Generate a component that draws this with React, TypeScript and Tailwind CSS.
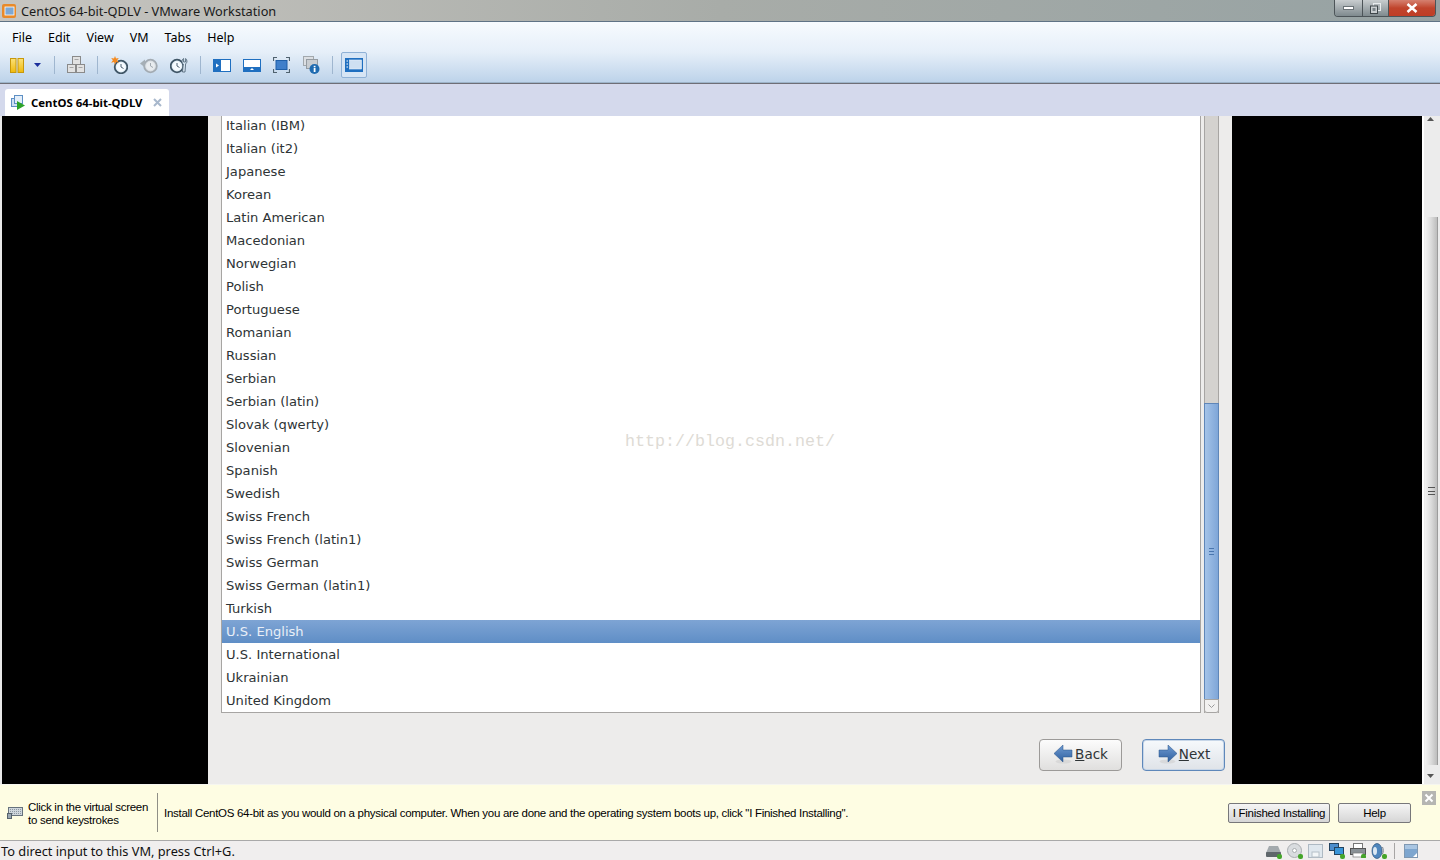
import React from "react";

const rows = ["Italian (IBM)","Italian (it2)","Japanese","Korean","Latin American","Macedonian","Norwegian","Polish","Portuguese","Romanian","Russian","Serbian","Serbian (latin)","Slovak (qwerty)","Slovenian","Spanish","Swedish","Swiss French","Swiss French (latin1)","Swiss German","Swiss German (latin1)","Turkish","U.S. English","U.S. International","Ukrainian","United Kingdom"];

const Sep = () => <div className="w-px h-[18px] bg-[#9fb6cf]" />;

const Clock = ({ grey, cx, cy }: { grey?: boolean; cx: number; cy: number }) => (
  <g>
    <circle cx={cx} cy={cy} r="6.300" fill={grey ? "#dbe0e5" : "#e6f1f9"} stroke={grey ? "#a3abb2" : "#3f5566"} strokeWidth="1.800" />
    <circle cx={cx} cy={cy} r="4.300" fill={grey ? "#e8ecef" : "#f6fbff"} />
    <path d={`M${cx} ${cy - 3}V${cy}l2.500 1.500`} fill="none" stroke={grey ? "#a3abb2" : "#4f6272"} strokeWidth="1" />
  </g>
);

function Toolbar() {
  return (
    <div className="flex items-center h-[30px] pl-[10px]">
      <svg width="14" height="15" viewBox="0 0 14 15"><defs><linearGradient id="pa" x1="0" y1="0" x2="0" y2="1"><stop offset="0" stopColor="#fbe27a"/><stop offset="1" stopColor="#f0b90b"/></linearGradient></defs><rect x="0.500" y="0.500" width="5.500" height="14" fill="url(#pa)" stroke="#c8980a"/><rect x="8" y="0.500" width="5.500" height="14" fill="url(#pa)" stroke="#c8980a"/></svg>
      <svg className="ml-[10px]" width="7" height="4" viewBox="0 0 7 4"><path d="M0 0h7L3.500 4z" fill="#1c2f9c"/></svg>
      <div className="ml-[13px]"><Sep /></div>
      <svg className="ml-[12px]" width="18" height="18" viewBox="0 0 18 18"><g fill="#e2e2e2" stroke="#8a8a8a"><rect x="5.500" y="0.500" width="8" height="8"/><rect x="0.500" y="8.500" width="8" height="8"/><rect x="9.500" y="8.500" width="8" height="8"/></g><path d="M7.500 3.500h4M2.500 11.500h4M11.500 11.500h4" stroke="#a5a5a5"/></svg>
      <div className="ml-[12px]"><Sep /></div>
      <svg className="ml-[12px]" width="18" height="18" viewBox="0 0 18 18"><Clock cx={11} cy={11} /><path d="M5 0l1 2.600 2.800-.6-1.700 2.300L8.800 6.700 6 6.100 5 8.800 4 6.100l-2.800.6 1.700-2.400L1.200 2 4 2.600z" fill="#f58a1f"/></svg>
      <svg className="ml-[12px]" width="18" height="18" viewBox="0 0 18 18"><Clock grey cx={10.500} cy={10} /><path d="M0 7.500l5-4v8z" fill="#a6afb6"/></svg>
      <svg className="ml-[12px]" width="18" height="18" viewBox="0 0 18 18"><Clock cx={7} cy={10} /><path d="M12.500 16l.8-8c-1.300-.8-1.700-2.500-1-4 .3-.7.800-1.200 1.300-1.500V6h2V2.500c1.800 1.200 1.800 4.200 0 5.400l-.6 8.100z" fill="#dbe9f5" stroke="#53697a" strokeWidth=".9"/></svg>
      <div className="ml-[12px]"><Sep /></div>
      <svg className="ml-[12px]" width="18" height="13" viewBox="0 0 18 13"><rect width="18" height="13" fill="#1f6fc0"/><rect x="8" y="1" width="9" height="11" fill="#fff"/><path d="M3 4.500l3 2-3 2z" fill="#fff"/></svg>
      <svg className="ml-[12px]" width="18" height="13" viewBox="0 0 18 13"><rect width="18" height="13" fill="#1f6fc0"/><rect x="1" y="1" width="16" height="7" fill="#fff"/><path d="M7 11l2-2 2 2z" fill="#fff"/></svg>
      <svg className="ml-[12px]" width="17" height="16" viewBox="0 0 17 16"><rect x="3" y="3.500" width="11" height="9" fill="#3f7fca" stroke="#1f5fa8"/><path d="M.5 4V.5H4M13 .5h3.500V4M.5 12v3.500H4M16.500 12v3.500H13" fill="none" stroke="#50626f" strokeWidth="1.200"/></svg>
      <svg className="ml-[13px]" width="17" height="18" viewBox="0 0 17 18"><rect x="0.500" y="0.500" width="10" height="9" fill="#dcdfe3" stroke="#a2a8ad"/><rect x="3.500" y="3.500" width="11" height="9" fill="#c9cdd1" stroke="#959ca2"/><circle cx="11.500" cy="13" r="5" fill="#1f6bb0"/><rect x="10.700" y="12" width="1.800" height="4" fill="#fff"/><rect x="10.700" y="9.800" width="1.800" height="1.500" fill="#fff"/></svg>
      <div className="ml-[12px]"><Sep /></div>
      <div className="ml-[8px] w-[26px] h-[26px] flex items-center justify-center rounded-[2px] border border-[#8fb1d6] bg-[#d6e5f5]">
        <svg width="18" height="14" viewBox="0 0 18 14"><rect width="18" height="14" fill="#1f6fc0"/><rect x="4.500" y="2" width="12" height="9" fill="#cfe0f2" stroke="#eaf2fa" strokeWidth=".6"/><path d="M1.500 3h1.500M1.500 6h1.500M1.500 9h1.500" stroke="#fff"/></svg>
      </div>
    </div>
  );
}

const NavArrow = ({ left }: { left?: boolean }) => (
  <svg width="19" height="19" viewBox="0 0 19 19"><defs><linearGradient id={left ? "al" : "ar"} x1="0" y1="0" x2="0" y2="1"><stop offset="0" stopColor="#6f9bd2"/><stop offset="1" stopColor="#2e5f9f"/></linearGradient></defs><ellipse cx="9.500" cy="16.500" rx="8" ry="2" fill="#cfcfcf" opacity=".6"/><path d={left ? "M0 8.500L9 0v5h9v7H9v5z" : "M19 8.500L10 0v5H1v7h9v5z"} fill={`url(#${left ? "al" : "ar"})`} stroke="#2b5488" strokeWidth=".5"/></svg>
);

const Dot = () => <rect x="11" y="11" width="5" height="5" rx="2" fill="#45a52a" />;

function StatusIcons() {
  return (
    <div className="flex items-center gap-[5px] pr-[22px]">
      <svg width="16" height="16" viewBox="0 0 16 16"><path d="M3 3h9l3 7H0z" fill="#a3a9ad"/><rect x="0" y="9" width="15" height="5" rx="1" fill="#5f666b"/><Dot /></svg>
      <svg width="16" height="16" viewBox="0 0 16 16"><circle cx="7.500" cy="7.500" r="7" fill="#d9dcdf" stroke="#a9adb1"/><circle cx="7.500" cy="7.500" r="2" fill="#fff" stroke="#a9adb1"/><Dot /></svg>
      <svg width="15" height="14" viewBox="0 0 15 14"><rect x="0.500" y="0.500" width="14" height="13" fill="#dfe7ee" stroke="#aeb9c3"/><rect x="4" y="8" width="7" height="5" fill="#f3f6f8" stroke="#b6c0c8"/></svg>
      <svg className="ml-[1px]" width="16" height="16" viewBox="0 0 16 16"><rect x="0.500" y="0.500" width="9" height="7" fill="#4b8ccc" stroke="#24435f"/><rect x="5.500" y="4.500" width="9" height="7" fill="#3a95d8" stroke="#24435f"/><Dot /></svg>
      <svg width="16" height="15" viewBox="0 0 16 15"><rect x="3.500" y="0.500" width="9" height="5" fill="#fff" stroke="#777"/><rect x="0.500" y="5.500" width="15" height="6" fill="#8a9196" stroke="#555"/><rect x="3" y="10" width="10" height="4" fill="#fff" stroke="#777" strokeWidth=".7"/><Dot /></svg>
      <svg width="16" height="16" viewBox="0 0 16 16"><ellipse cx="6" cy="8" rx="5" ry="7.500" fill="#4f86bd" stroke="#2a527a" strokeWidth=".7"/><ellipse cx="4" cy="8" rx="2" ry="4" fill="#dbe8f3"/><path d="M11.500 4c1 2 1 5 0 7" fill="none" stroke="#78808a"/><Dot /></svg>
      <div className="w-px h-[16px] bg-[#a7a5a5] mx-[2px]" />
      <svg className="ml-[2px]" width="14" height="14" viewBox="0 0 14 14"><rect x="0.500" y="0.500" width="13" height="13" fill="#7ea6cf" stroke="#7f98b2"/><rect x="1" y="1" width="12" height="4" fill="#a9c5e2"/><path d="M9 13l4-4v4z" fill="#fff"/></svg>
    </div>
  );
}

export default function App() {
  return (
    <div className="w-[1440px] h-[860px] overflow-hidden flex flex-col relative bg-[#f0eeee] font-['Noto_Sans','Open_Sans',sans-serif] text-black">
      <div className="h-[21px] flex items-center justify-between bg-gradient-to-r from-[#c7c5c0] via-[#a8aca8] to-[#96a2a3]">
        <div className="flex items-center">
          <svg className="ml-[1px]" width="16" height="16" viewBox="0 0 16 16"><rect x="1" y="1" width="14" height="14" rx="2" fill="#e88a2a"/><rect x="4" y="4" width="9" height="8" fill="#7ea8d4" stroke="#fff" strokeWidth=".8"/></svg>
          <span className="ml-[4px] text-[12.750px] leading-[20px] text-[#1a1a1a]">CentOS 64-bit-QDLV - VMware Workstation</span>
        </div>
        <div className="flex self-start h-[17px] mr-[4px] rounded-b-[4px] border border-t-0 border-[#4c5458] overflow-hidden">
          <div className="w-[28px] flex items-center justify-center bg-gradient-to-b from-[#c8cdcf] to-[#7f8a8e] border-r border-[#4c5458]"><div className="w-[11px] h-[4px] bg-white border border-[#6a7377]" /></div>
          <div className="w-[26px] flex items-center justify-center bg-gradient-to-b from-[#c8cdcf] to-[#7f8a8e] border-r border-[#4c5458]">
            <svg width="11" height="11" viewBox="0 0 11 11"><rect x="3.500" y="0.500" width="7" height="7" fill="none" stroke="#e8ecee"/><rect x="0.500" y="3" width="7" height="7.500" fill="#c9ced0" stroke="#3f474b"/><rect x="2.500" y="5" width="3" height="3" fill="#7a8388"/></svg>
          </div>
          <div className="w-[46px] flex items-center justify-center bg-gradient-to-b from-[#d5806f] via-[#c0442c] to-[#bf3d25]"><svg width="14" height="10" viewBox="0 0 14 10"><path d="M2.500 1l9 8M11.500 1l-9 8" stroke="#fff" strokeWidth="2.600"/></svg></div>
        </div>
      </div>
      <div className="h-[62px] border-t border-t-[#5f7385] border-b border-b-[#9db4c9] bg-gradient-to-b from-[#f7fbfe] via-[#e6eff9] to-[#bdd3ea]">
        <div className="flex h-[28px] items-center pl-[12px] gap-[16px] text-[12.500px] pt-[4px]">
          <span>File</span><span>Edit</span><span>View</span><span>VM</span><span>Tabs</span><span>Help</span>
        </div>
        <Toolbar />
      </div>
      <div className="h-[33px] flex items-end pl-[5px] bg-[#d4d9ec] border-t border-[#6e6e76]">
        <div className="w-[164px] h-[27px] flex items-center bg-white rounded-t-[3px]">
          <svg className="ml-[6px]" width="16" height="16" viewBox="0 0 16 16"><rect x="0.500" y="3.500" width="9" height="8" fill="#cfe0f2" stroke="#5d8fc4"/><rect x="3.500" y="0.500" width="8" height="8" fill="#e3eef9" stroke="#5d8fc4"/><path d="M6 6l8 4.500L6 15z" fill="#2da32a"/></svg>
          <span className="ml-[4px] pt-[1px] text-[11.400px] font-bold">CentOS 64-bit-QDLV</span>
          <svg className="ml-auto mr-[7px]" width="9" height="9" viewBox="0 0 9 9"><path d="M1 1l7 7M8 1L1 8" stroke="#a8b8cc" strokeWidth="2"/></svg>
        </div>
      </div>

      <div className="h-[668px] flex overflow-hidden relative">
        <div className="w-[208px] bg-black border-l-2 border-[#e8e8e8]" />
        <div className="w-[1024px] bg-[#edeceb] flex flex-col font-['DejaVu_Sans',sans-serif]">
          <div className="h-[597px] flex pl-[13px] pr-[13px]">
            <div className="w-[980px] shrink-0 h-[597px] bg-white border-l border-r border-b border-[#a7a5a3] overflow-hidden">
              <div className="-mt-[2px]">
                {rows.map((r) => (
                  <div key={r} className={r === "U.S. English" ? "h-[23px] pl-[4px] text-[13.100px] leading-[23px] text-[#e9eff7] bg-gradient-to-b from-[#7ea4d4] to-[#5f8ec6]" : "h-[23px] pl-[4px] text-[13.100px] leading-[23px] text-[#2e3436]"}>{r}</div>
                ))}
              </div>
            </div>
            <div className="ml-[3px] w-[15px] shrink-0 h-[597px] flex flex-col bg-[#d4d2cf] border-x border-[#a7a5a3]">
              <div className="h-[287px]" />
              <div className="h-[296px] bg-gradient-to-r from-[#a4c3e8] to-[#7fa6d8] border-t border-x border-[#5f86b8] -mx-px flex items-center justify-center">
                <div className="w-[5px] h-[7px] border-y border-[#4a76ae] flex items-center"><div className="w-full h-px bg-[#4a76ae]" /></div>
              </div>
              <div className="h-[14px] -mx-px bg-[#f2f1f0] border border-[#a7a5a3] rounded-b-[3px] flex items-center justify-center">
                <svg width="7" height="4" viewBox="0 0 7 4"><path d="M.5.500l3 3 3-3" fill="none" stroke="#9a9a9a"/></svg>
              </div>
            </div>
          </div>
          <div className="flex justify-end gap-[20px] pr-[7px] mt-[26px] text-[13.500px] text-[#2e3436]">
            <button className="w-[83px] h-[32px] pb-[1px] pl-[1px] flex items-center justify-center gap-[2px] rounded-[4px] border border-[#9c9a98] bg-gradient-to-b from-[#fcfcfc] to-[#e0dfde]">
              <NavArrow left /><span><u>B</u>ack</span>
            </button>
            <button className="w-[83px] h-[32px] pb-[1px] pl-[1px] flex items-center justify-center gap-[2px] rounded-[4px] border border-[#5f88ba] shadow-[inset_0_0_0_1px_#c7d6e8] bg-gradient-to-b from-[#f6f9fc] to-[#dfe3e8]">
              <NavArrow /><span><u>N</u>ext</span>
            </button>
          </div>
        </div>
        <div className="w-[190px] bg-black" />
        <div className="w-[18px] flex flex-col bg-[#ececec] border-l-2 border-white">
          <div className="h-[101px]" />
          <div className="flex-1 mb-[19px] ml-[1px] mr-[2px] bg-gradient-to-r from-[#f2f2f2] via-[#dcdcdc] to-[#bdbdbd] border-r border-[#9c9c9c] flex items-center justify-center">
            <div className="w-[7px] h-[8px] border-y border-[#555] flex items-center"><div className="w-full h-px bg-[#555]" /></div>
          </div>
          <svg className="absolute right-[6px] top-[1px]" width="7" height="4" viewBox="0 0 7 4"><path d="M3.500 0L7 4H0z" fill="#555"/></svg>
          <svg className="absolute right-[6px] bottom-[6px]" width="7" height="4" viewBox="0 0 7 4"><path d="M3.500 4L7 0H0z" fill="#555"/></svg>
        </div>
        <span className="absolute left-[625px] top-[314px] text-[16.667px] leading-[24px] text-[#dedbd5] font-['Liberation_Mono',monospace]">http://blog.csdn.net/</span>
      </div>

      <div className="h-[56px] flex items-center bg-[#fefde3] border-t border-[#f6f6f0] relative font-['Liberation_Sans',sans-serif] text-[11.500px] tracking-[-0.29px]">
        <svg className="ml-[7px]" width="16" height="12" viewBox="0 0 16 12"><rect x="1.500" y="0.500" width="14" height="8" fill="#cfd6dc" stroke="#66727c"/><path d="M3 2.500h11M3 4.500h11M3 6.500h11" stroke="#8c98a2" strokeDasharray="1 1"/><rect x="0.500" y="6.500" width="4" height="5" fill="#9aa7b2" stroke="#57636d"/></svg>
        <div className="ml-[5px] w-[129px] pt-[2px] leading-[13px] whitespace-nowrap">Click in the virtual screen<br />to send keystrokes</div>
        <div className="w-px h-[39px] bg-[#8f8f86]" />
        <span className="ml-[6px] pt-[2px] whitespace-nowrap">Install CentOS 64-bit as you would on a physical computer. When you are done and the operating system boots up, click "I Finished Installing".</span>
        <div className="ml-auto flex gap-[8px] mr-[29px]">
          <button className="w-[102px] h-[20px] whitespace-nowrap rounded-[2px] border border-[#77777a] bg-gradient-to-b from-[#f5f5f5] to-[#d6d6d6] leading-[19px]">I Finished Installing</button>
          <button className="w-[73px] h-[20px] rounded-[2px] border border-[#77777a] bg-gradient-to-b from-[#f5f5f5] to-[#d6d6d6] leading-[19px]">Help</button>
        </div>
        <div className="absolute right-[4px] top-[6px] w-[14px] h-[14px] bg-[#b5b5b2] flex items-center justify-center">
          <svg width="10" height="10" viewBox="0 0 10 10"><path d="M1.500 1.500l7 7M8.500 1.500l-7 7" stroke="#fff" strokeWidth="2"/></svg>
        </div>
      </div>

      <div className="h-[20px] flex items-center justify-between bg-[#f0eeee] border-t border-[#a9a9a9]">
        <span className="pl-[1px] pt-[1px] text-[12.800px] leading-[19px] text-[#111]">To direct input to this VM, press Ctrl+G.</span>
        <StatusIcons />
      </div>
    </div>
  );
}
